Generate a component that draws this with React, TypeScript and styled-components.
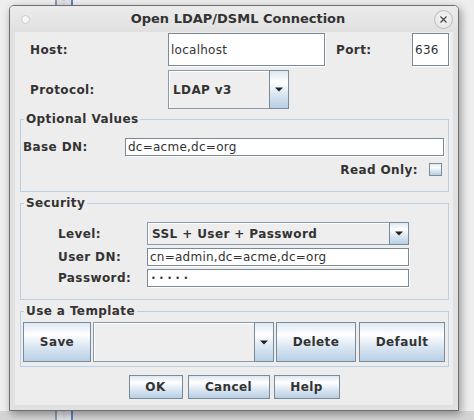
import React from "react";
import styled, { createGlobalStyle } from "styled-components";

const Global = createGlobalStyle`
  html, body { margin: 0; padding: 0; background: #ececec; }
  body { width: 474px; height: 420px; overflow: hidden; font-family: "DejaVu Sans", "Liberation Sans", sans-serif; }
`;

const Desktop = styled.div`
  position: relative;
  width: 474px;
  height: 420px;
  overflow: hidden;
  background: linear-gradient(to bottom, #eeeeee 0, #eeeeee 411px, #d5d5d5 411px);
`;

const ScrollStub = styled.div`
  position: absolute;
  left: 55px;
  top: 0;
  width: 18px;
  height: 420px;
  box-sizing: border-box;
  border-left: 2px solid #8c9bb0;
  border-right: 2px solid #5f80b5;
  background: repeating-linear-gradient(to bottom, #c8c8c8 0 1px, transparent 1px 3px) 6px 0 / 2px 100% no-repeat,
    #dfe3e8;
`;

const Window = styled.div`
  position: absolute;
  left: 9px;
  top: 5px;
  width: 450px;
  height: 406px;
  box-sizing: border-box;
  border: 1px solid #6e6e6e;
  border-radius: 5px 5px 0 0;
  background: #e1e1e1;
  box-shadow: 2px 3px 9px rgba(0, 0, 0, 0.38);
  display: flex;
  flex-direction: column;
`;

const TitleBar = styled.div`
  height: 26px;
  flex: none;
  display: flex;
  align-items: center;
  padding: 0 5px 0 11px;
  border-radius: 4px 4px 0 0;
  background: linear-gradient(to bottom, #ececec, #e0e0e0);
`;

const Dot = styled.span`
  width: 9px;
  height: 9px;
  box-sizing: border-box;
  border-radius: 50%;
  border: 1px solid #c9c9c9;
  background: #f6f6f6;
`;

const Title = styled.div`
  flex: 1;
  text-align: center;
  padding-left: 12px;
  font-weight: bold;
  font-size: 13px;
  color: #333;
  line-height: 16px;
`;

const CloseButton = styled.span`
  width: 19px;
  height: 19px;
  box-sizing: border-box;
  border-radius: 50%;
  border: 1px solid #bdbdbd;
  background: radial-gradient(circle at 50% 40%, #f4f4f4, #e2e2e2);
  display: flex;
  align-items: center;
  justify-content: center;
`;

const Frame = styled.div`
  flex: 1;
  display: flex;
  padding: 0 5px 5px 5px;
`;

const Content = styled.div`
  flex: 1;
  background: #ededed;
  display: flex;
  flex-direction: column;
  color: #333;
  font-size: 12px;
`;

const Row = styled.div<{ $top: number; $h: number; $left?: number; $right?: number; $end?: boolean; $center?: boolean }>`
  display: flex;
  align-items: center;
  margin-top: ${(p) => p.$top}px;
  height: ${(p) => p.$h}px;
  padding-left: ${(p) => p.$left ?? 0}px;
  padding-right: ${(p) => p.$right ?? 0}px;
  justify-content: ${(p) => (p.$end ? "flex-end" : p.$center ? "center" : "flex-start")};
`;

const Label = styled.span<{ $w?: number; $gap?: number }>`
  font-weight: bold;
  font-size: 12px;
  letter-spacing: 0.4px;
  color: #333;
  white-space: nowrap;
  ${(p) => (p.$w ? `width: ${p.$w}px; flex: none;` : "")}
  margin-left: ${(p) => p.$gap ?? 0}px;
`;

const Field = styled.div<{ $w: number; $h?: number }>`
  width: ${(p) => p.$w}px;
  height: ${(p) => p.$h ?? 18}px;
  box-sizing: border-box;
  border: 1px solid #7a8a99;
  box-shadow: 1px 1px 0 #ffffff;
  background: #ffffff;
  display: flex;
  align-items: center;
  padding-left: 2px;
  font-size: 12px;
  letter-spacing: 0.25px;
  color: #333;
  white-space: nowrap;
  overflow: hidden;
`;

const Dots = styled.span`
  font-size: 8px;
  letter-spacing: 3.4px;
  padding-left: 1px;
  color: #333;
`;

const Combo = styled.div<{ $w: number; $h: number; $gap?: number }>`
  width: ${(p) => p.$w}px;
  height: ${(p) => p.$h}px;
  margin-left: ${(p) => p.$gap ?? 0}px;
  display: flex;
  flex: none;
`;

const ComboValue = styled.div`
  flex: 1;
  box-sizing: border-box;
  border: 1px solid #8a9aab;
  border-right: none;
  background: #eeeeee;
  box-shadow: inset 1px 1px 0 #ffffff;
  display: flex;
  align-items: center;
  padding-left: 4px;
  font-weight: bold;
  font-size: 12px;
  letter-spacing: 0.4px;
  color: #333;
`;

const gradient = `linear-gradient(to bottom, #dde8f3 0%, #ffffff 30%, #dde8f3 60%, #b8cfe5 100%)`;

const ArrowButton = styled.div`
  width: 20px;
  flex: none;
  box-sizing: border-box;
  border: 1px solid #7a8a99;
  background: ${gradient};
  display: flex;
  align-items: center;
  justify-content: center;
`;

const Button = styled.div<{ $w: number; $h: number; $gap?: number }>`
  width: ${(p) => p.$w}px;
  height: ${(p) => p.$h}px;
  margin-left: ${(p) => p.$gap ?? 0}px;
  flex: none;
  box-sizing: border-box;
  border: 1px solid #7a8a99;
  background: ${gradient};
  display: flex;
  align-items: center;
  justify-content: center;
  font-weight: bold;
  font-size: 12px;
  letter-spacing: 0.4px;
  color: #333;
`;

const Check = styled.span`
  width: 13px;
  height: 13px;
  box-sizing: border-box;
  border: 1px solid #7a8a99;
  background: ${gradient};
  margin-left: 11px;
`;

const Group = styled.div<{ $top: number; $h: number }>`
  margin: ${(p) => p.$top}px 0 0 5px;
  width: 429px;
  height: ${(p) => p.$h}px;
  box-sizing: border-box;
  border: 1px solid #b8cfe5;
  display: flex;
  flex-direction: column;
`;

const GroupTitle = styled.span`
  align-self: flex-start;
  margin: -8px 0 0 3px;
  padding: 0 2px;
  height: 14px;
  line-height: 14px;
  background: #ededed;
  font-weight: bold;
  font-size: 12px;
  letter-spacing: 0.4px;
  color: #333;
`;

const Arrow = () => (
  <svg width="8" height="5" viewBox="0 0 8 5">
    <path d="M0 0.5 H8 L4 4.5 Z" fill="#222" />
  </svg>
);

export default function App() {
  return (
    <Desktop>
      <Global />
      <ScrollStub />
      <Window>
        <TitleBar>
          <Dot />
          <Title>Open LDAP/DSML Connection</Title>
          <CloseButton>
            <svg width="9" height="9" viewBox="0 0 9 9">
              <path d="M1.5 1.5 L7.5 7.5 M7.5 1.5 L1.5 7.5" stroke="#444" strokeWidth="1.2" />
            </svg>
          </CloseButton>
        </TitleBar>
        <Frame>
          <Content>
            <Row $top={1} $h={33} $left={15}>
              <Label $w={138}>Host:</Label>
              <Field $w={157} $h={33}>localhost</Field>
              <Label $w={76} $gap={11}>Port:</Label>
              <Field $w={37} $h={33}>636</Field>
            </Row>
            <Row $top={4} $h={39} $left={15}>
              <Label $w={138}>Protocol:</Label>
              <Combo $w={121} $h={39}>
                <ComboValue>LDAP v3</ComboValue>
                <ArrowButton>
                  <Arrow />
                </ArrowButton>
              </Combo>
            </Row>

            <Group $top={10} $h={73}>
              <GroupTitle>Optional Values</GroupTitle>
              <Row $top={12} $h={18} $left={2}>
                <Label $w={102}>Base DN:</Label>
                <Field $w={319}>dc=acme,dc=org</Field>
              </Row>
              <Row $top={7} $h={13} $right={6} $end>
                <Label>Read Only:</Label>
                <Check />
              </Row>
            </Group>

            <Group $top={11} $h={97}>
              <GroupTitle>Security</GroupTitle>
              <Row $top={12} $h={23} $left={37}>
                <Label $w={89}>Level:</Label>
                <Combo $w={262} $h={23}>
                  <ComboValue>SSL + User + Password</ComboValue>
                  <ArrowButton>
                    <Arrow />
                  </ArrowButton>
                </Combo>
              </Row>
              <Row $top={3} $h={18} $left={37}>
                <Label $w={89}>User DN:</Label>
                <Field $w={262}>cn=admin,dc=acme,dc=org</Field>
              </Row>
              <Row $top={3} $h={18} $left={37}>
                <Label $w={89}>Password:</Label>
                <Field $w={262}>
                  <Dots>•••••</Dots>
                </Field>
              </Row>
            </Group>

            <Group $top={11} $h={56}>
              <GroupTitle>Use a Template</GroupTitle>
              <Row $top={4} $h={40} $left={2}>
                <Button $w={68} $h={40}>Save</Button>
                <Combo $w={181} $h={40} $gap={2}>
                  <ComboValue />
                  <ArrowButton>
                    <Arrow />
                  </ArrowButton>
                </Combo>
                <Button $w={80} $h={40} $gap={2}>Delete</Button>
                <Button $w={86} $h={40} $gap={3}>Default</Button>
              </Row>
            </Group>

            <Row $top={8} $h={24} $center>
              <Button $w={54} $h={24}>OK</Button>
              <Button $w={82} $h={24} $gap={5}>Cancel</Button>
              <Button $w={66} $h={24} $gap={4}>Help</Button>
            </Row>
          </Content>
        </Frame>
      </Window>
    </Desktop>
  );
}
